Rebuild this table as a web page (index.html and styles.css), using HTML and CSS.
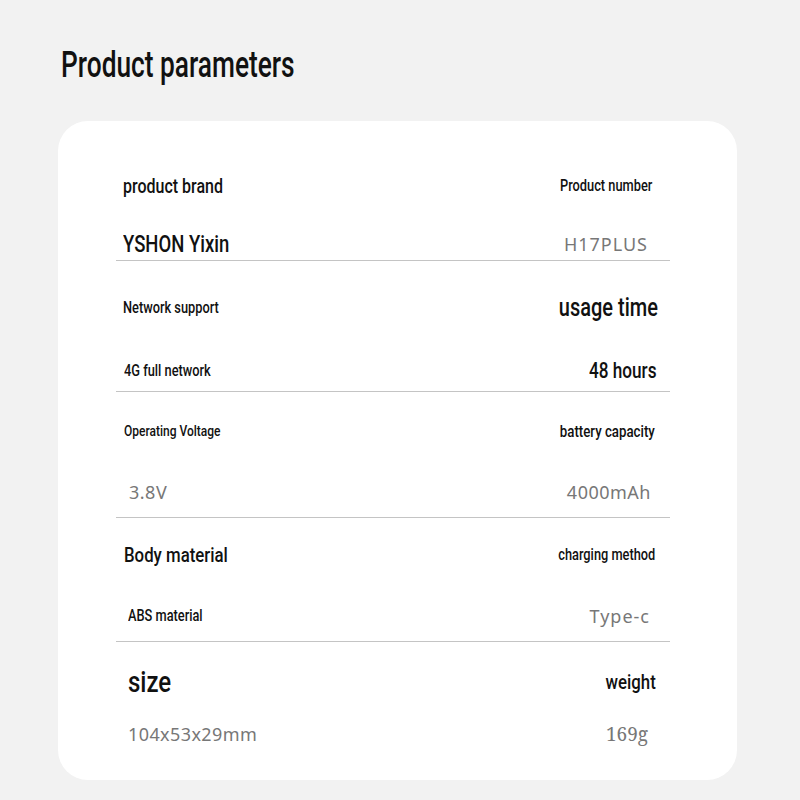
FILE: index.html
```html
<!DOCTYPE html>
<html lang="en">
<head>
<meta charset="utf-8">
<title>Product parameters</title>
<link rel="stylesheet" href="styles.css">
</head>
<body>
<main class="page">
  <h1 class="title"><span class="t tt">Product parameters</span></h1>
  <section class="card">
    <div class="row r1">
      <div class="cell left">
        <div class="label fs20"><span class="t">product brand</span></div>
        <div class="value dark fs24"><span class="t t77">YSHON Yixin</span></div>
      </div>
      <div class="cell right">
        <div class="label fs16 pr18"><span class="t">Product number</span></div>
        <div class="value gray sans fs18 ls1 pr22">H17PLUS</div>
      </div>
    </div>
    <div class="row r2">
      <div class="cell left">
        <div class="label fs16"><span class="t">Network support</span></div>
        <div class="value dark fs16 pl1"><span class="t">4G full network</span></div>
      </div>
      <div class="cell right">
        <div class="label fs25 pr12"><span class="t">usage time</span></div>
        <div class="value dark fs22 pr13"><span class="t t78">48 hours</span></div>
      </div>
    </div>
    <div class="row r3">
      <div class="cell left">
        <div class="label fs15 pl1"><span class="t">Operating Voltage</span></div>
        <div class="value gray sans fs18 ls05 pl6">3.8V</div>
      </div>
      <div class="cell right">
        <div class="label fs17 pr15"><span class="t t78">battery capacity</span></div>
        <div class="value gray sans fs18 ls05 pr19">4000mAh</div>
      </div>
    </div>
    <div class="row r4">
      <div class="cell left">
        <div class="label fs21 pl1"><span class="t">Body material</span></div>
        <div class="value dark fs16 pl5"><span class="t">ABS material</span></div>
      </div>
      <div class="cell right">
        <div class="label fs16 pr15"><span class="t">charging method</span></div>
        <div class="value gray sans fs18 ls1 pr20">Type-c</div>
      </div>
    </div>
    <div class="row r5">
      <div class="cell left">
        <div class="label fs30 pl5"><span class="t">size</span></div>
        <div class="value gray sans fs18 ls04 pl5">104x53x29mm</div>
      </div>
      <div class="cell right">
        <div class="label fs21 pr14"><span class="t">weight</span></div>
        <div class="value gray serif fs19 pr22">169g</div>
      </div>
    </div>
  </section>
</main>
</body>
</html>
```

FILE: styles.css
```css
* { box-sizing: border-box; }

html, body {
  margin: 0;
  padding: 0;
  background: #f2f2f2;
}

body {
  font-family: Roboto, "Liberation Sans", sans-serif;
  font-weight: 500;
  color: #111;
}

.t {
  display: inline-block;
  transform: scaleX(0.8);
  transform-origin: left center;
}
.t.t77 { transform: scaleX(0.77); }
.t.t78 { transform: scaleX(0.78); }
.t.tt { transform: scaleX(0.73); }

.page {
  width: 800px;
  height: 800px;
  padding: 44px 63px 0 58px;
}

.title {
  margin: 0 0 0 3px;
  font-size: 36px;
  line-height: 42px;
  font-weight: 500;
  color: #111;
}

.card {
  margin-top: 35px;
  width: 679px;
  height: 659px;
  background: #fff;
  border-radius: 30px;
  padding: 0 67px 0 58px;
}

.row {
  display: flex;
  border-bottom: 1px solid #c4c4c4;
}

.row.r5 { border-bottom: none; }

.cell {
  flex: 1;
  display: flex;
  flex-direction: column;
}

.cell.left { align-items: flex-start; padding-left: 7px; }
.cell.right { align-items: flex-end; }
.cell.right .t { transform-origin: right center; }

.label, .value {
  height: 30px;
  line-height: 30px;
  white-space: nowrap;
}

.r1 { height: 140px; padding-top: 50px; }
.r1 .cell { gap: 28px; }
.r2 { height: 131px; padding-top: 32px; }
.r2 .cell { gap: 33px; }
.r3 { height: 126px; padding-top: 24px; }
.r3 .cell { gap: 31px; }
.r4 { height: 124px; padding-top: 22px; }
.r4 .cell { gap: 31px; }
.r5 { height: 138px; padding-top: 25px; }
.r5 .cell { gap: 22px; }

.dark { color: #111; }
.gray { color: #777; }

.sans {
  font-family: "Noto Sans", "Open Sans", sans-serif;
  font-weight: 400;
}
.serif {
  font-family: "Noto Serif", "DejaVu Serif", "Liberation Serif", serif;
  font-weight: 400;
}
.ls1 { letter-spacing: 1px; }
.ls05 { letter-spacing: 0.5px; }
.ls04 { letter-spacing: 0.4px; }

.fs15 { font-size: 15px; }
.fs16 { font-size: 16px; }
.fs17 { font-size: 17px; }
.fs18 { font-size: 18px; }
.fs19 { font-size: 19px; }
.fs20 { font-size: 20px; }
.fs21 { font-size: 21px; }
.fs22 { font-size: 22px; }
.fs24 { font-size: 24px; }
.fs25 { font-size: 25px; }
.fs30 { font-size: 30px; }

.pl1 { padding-left: 1px; }
.pl5 { padding-left: 5px; }
.pl6 { padding-left: 6px; }

.pr12 { padding-right: 12px; }
.pr13 { padding-right: 13px; }
.pr14 { padding-right: 14px; }
.pr15 { padding-right: 15px; }
.pr18 { padding-right: 18px; }
.pr19 { padding-right: 19px; }
.pr20 { padding-right: 20px; }
.pr22 { padding-right: 22px; }
```
